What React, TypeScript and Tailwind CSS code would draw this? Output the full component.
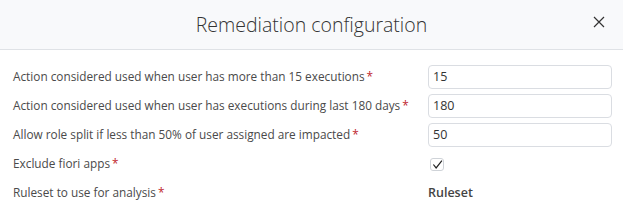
const rows = [
  { label: 'Action considered used when user has more than 15 executions', value: '15' },
  { label: 'Action considered used when user has executions during last 180 days', value: '180' },
  { label: 'Allow role split if less than 50% of user assigned are impacted', value: '50' },
];

function Req() {
  return <span className="ml-[2px] text-[#c0262d]">*</span>;
}

export default function App() {
  return (
    <div className="h-[207px] w-[623px] overflow-hidden bg-white text-[#4a4a4a]" style={{ fontFamily: '"Segoe UI", "Open Sans", "Noto Sans", sans-serif' }}>
      <header className="relative flex h-[50px] items-center justify-center border-b border-[#dfe2e6] bg-[#f8f9fb]">
        <h1 className="text-[19.5px] font-light text-[#333]">Remediation configuration</h1>
        <button type="button" className="absolute right-[18px] top-[16px] text-[#333]" aria-label="Close">
          <svg viewBox="0 0 12 12" className="h-[12px] w-[12px]">
            <path d="M1 1l10 10M11 1 1 11" fill="none" stroke="currentColor" strokeWidth="1.2" />
          </svg>
        </button>
      </header>

      <div className="grid grid-cols-[415px_184px] gap-y-[5px] pl-[13px] pt-[15px] text-[11.8px] whitespace-nowrap">
        {rows.map((row) => (
          <div key={row.value} className="contents">
            <label className="flex h-[24px] items-center">
              {row.label}
              <Req />
            </label>
            <div className="flex h-[24px] items-center rounded-[4px] border border-[#dadde2] px-[4px] text-[12.5px] text-[#333]">
              {row.value}
            </div>
          </div>
        ))}
        <label className="flex h-[24px] items-center">
          Exclude fiori apps
          <Req />
        </label>
        <div className="flex h-[24px] items-center pl-[2px]">
          <span className="grid h-[13px] w-[14px] place-items-center rounded-[3px] border border-[#cfd3d8]">
            <svg viewBox="0 0 12 12" className="h-[11px] w-[11px]">
              <path d="M1.5 6 4.5 9.8 10.8 1.8" fill="none" stroke="#222" strokeWidth="1.3" />
            </svg>
          </span>
        </div>
        <label className="flex h-[24px] items-center">
          Ruleset to use for analysis
          <Req />
        </label>
        <div className="flex h-[24px] items-center text-[12.5px] font-semibold text-[#444]">Ruleset</div>
      </div>
    </div>
  );
}
